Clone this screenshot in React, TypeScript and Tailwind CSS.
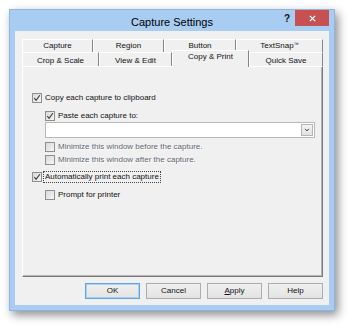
import React from 'react'

const ui = "font-['Liberation_Sans',Arial,sans-serif] text-[8px] leading-[10px] text-[#111]"

function Check({ checked }: { checked?: boolean }) {
    return (
        <span className="flex h-[10px] w-[10px] shrink-0 items-center justify-center border border-[#8f8f8f] bg-gradient-to-br from-[#d9d9d9] to-[#f6f6f6]">
            {checked && (
                <svg viewBox="0 0 8 8" className="h-[8px] w-[8px]">
                    <path d="M1.3 4.1 L3.1 6.3 L6.8 1.2" fill="none" stroke="#3a3a3a" strokeWidth="1.1" />
                </svg>
            )}
        </span>
    )
}

function Option({
    label,
    checked,
    disabled,
    focused,
    className = '',
}: {
    label: string
    checked?: boolean
    disabled?: boolean
    focused?: boolean
    className?: string
}) {
    return (
        <div className={`flex h-[12px] items-center gap-[1px] ${className}`}>
            <Check checked={checked} />
            <span
                className={`px-[1px] ${focused ? 'border border-dotted border-[#444]' : 'border border-transparent'} ${
                    disabled ? 'text-[#5f6670] [text-shadow:1px_1px_0_#ffffff]' : ''
                }`}
            >
                {label}
            </span>
        </div>
    )
}

function Tab({ label, className = '' }: { label: React.ReactNode; className?: string }) {
    return (
        <div className={`flex items-center justify-center border-t border-l border-white border-r border-r-[#858585] ${className}`}>
            {label}
        </div>
    )
}

function Button({ children, primary }: { children: React.ReactNode; primary?: boolean }) {
    return (
        <div
            className={`flex h-[16px] w-[55px] items-center justify-center border bg-gradient-to-b from-[#f0f0f0] to-[#e3e3e3] ${
                primary ? 'border-[#5fa3e3] shadow-[inset_0_0_0_1px_#a9d1f5]' : 'border-[#adadad]'
            }`}
        >
            {children}
        </div>
    )
}

export default function App() {
    return (
        <div className="h-[326px] w-[350px] overflow-hidden bg-white pl-[9px] pt-[9px]">
            <div className="flex h-[302px] w-[326px] flex-col border border-[#8fb6e0] bg-[#a8ccf2] shadow-[3px_4px_9px_rgba(0,0,0,0.45)]">
                {/* title bar */}
                <div className="grid h-[21px] grid-cols-[1fr_auto_1fr]">
                    <div />
                    <div className="pt-[5px] font-['Liberation_Sans',Arial,sans-serif] text-[11px] leading-[14px] text-black">
                        Capture Settings
                    </div>
                    <div className="flex items-start justify-end pr-[5px]">
                        <span className="mr-[5px] mt-[3px] font-['Liberation_Sans',Arial,sans-serif] text-[10px] font-bold leading-[12px] text-[#111]">
                            ?
                        </span>
                        <div className="flex h-[16px] w-[34px] items-center justify-center bg-[#c75050]">
                            <svg viewBox="0 0 8 8" className="h-[7px] w-[7px]">
                                <path d="M1 1 L7 7 M7 1 L1 7" stroke="#ffffff" strokeWidth="1.6" />
                            </svg>
                        </div>
                    </div>
                </div>

                {/* client area */}
                <div className={`mx-[5px] mb-[5px] flex flex-1 flex-col bg-[#f0f0f0] px-[7px] pt-[8px] ${ui}`}>
                    <div className="w-[301px]">
                        <div className="flex h-[13px]">
                            <Tab label="Capture" className="w-[71px]" />
                            <Tab label="Region" className="w-[71px]" />
                            <Tab label="Button" className="w-[72px]" />
                            <Tab
                                label={
                                    <span>
                                        TextSnap<sup className="text-[5px]">™</sup>
                                    </span>
                                }
                                className="w-[87px]"
                            />
                        </div>
                        <div className="flex h-[14px] items-end">
                            <Tab label="Crop & Scale" className="h-[14px] w-[77px] pt-[2px]" />
                            <Tab label="View & Edit" className="h-[14px] w-[73px] pt-[2px]" />
                            <div className="relative z-10 -mb-[1px] flex h-[17px] w-[77px] items-start justify-center border-t border-l border-white border-r border-r-[#858585] bg-[#f0f0f0] pt-[1px]">
                                Copy &amp; Print
                            </div>
                            <Tab label="Quick Save" className="h-[14px] w-[74px] pt-[2px]" />
                        </div>
                        <div className="flex h-[211px] flex-col border-t border-l border-white border-r border-b border-r-[#7a7a7a] border-b-[#7a7a7a] pl-[9px] pt-[25px] shadow-[inset_-1px_-1px_0_#b4b4b4]">
                            <Option label="Copy each capture to clipboard" checked />
                            <div className="ml-[13px] flex flex-col">
                                <Option label="Paste each capture to:" checked className="mt-[6px]" />
                                <div className="flex h-[16px] w-[270px] items-center justify-end border border-[#b8b8b8] bg-white pr-[1px]">
                                    <div className="flex h-[12px] w-[12px] items-center justify-center border border-[#b5b5b5] bg-gradient-to-b from-[#f3f3f3] to-[#e2e2e2]">
                                        <svg viewBox="0 0 8 8" className="h-[6px] w-[6px]">
                                            <path d="M1.5 2.5 L4 5.2 L6.5 2.5" fill="none" stroke="#333" strokeWidth="1.3" />
                                        </svg>
                                    </div>
                                </div>
                                <Option label="Minimize this window before the capture." disabled className="mt-[3px]" />
                                <Option label="Minimize this window after the capture." disabled className="mt-[1px]" />
                            </div>
                            <Option label="Automatically print each capture" checked focused className="mt-[5px]" />
                            <Option label="Prompt for printer" className="ml-[13px] mt-[6px]" />
                        </div>
                    </div>

                    <div className="mt-[6px] flex w-[301px] justify-end gap-[6px]">
                        <Button primary>OK</Button>
                        <Button>Cancel</Button>
                        <Button>
                            <span>
                                <span className="underline">A</span>pply
                            </span>
                        </Button>
                        <Button>Help</Button>
                    </div>
                </div>
            </div>
        </div>
    )
}
